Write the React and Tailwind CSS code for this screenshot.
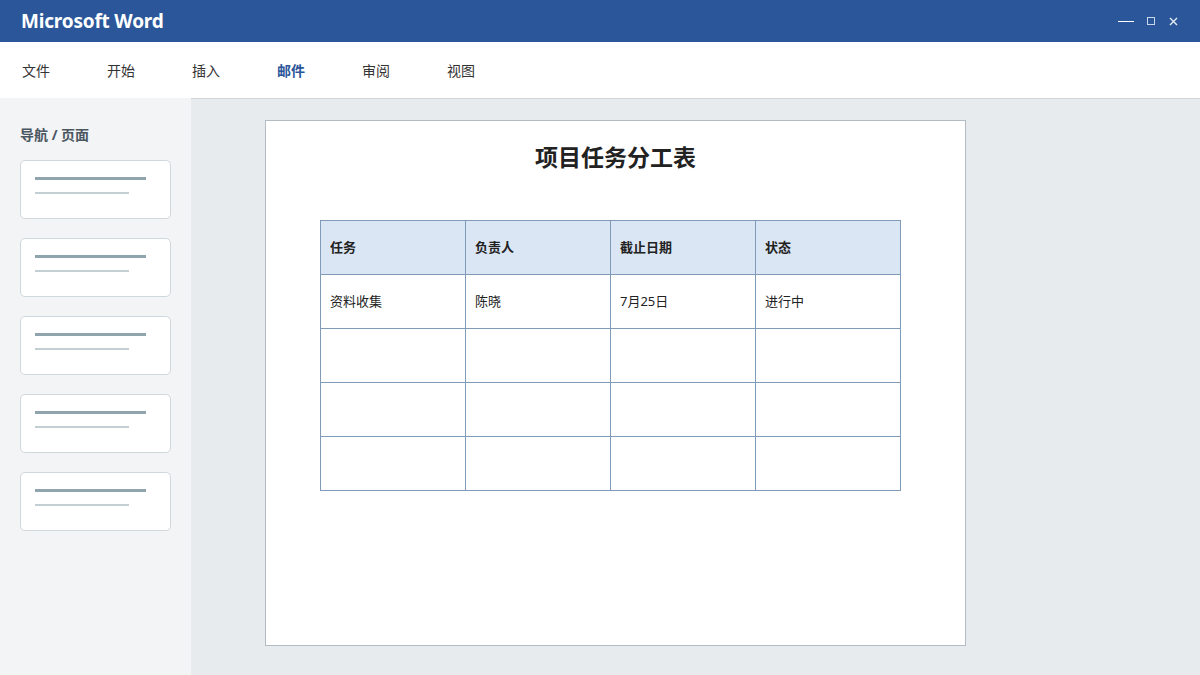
import React from "react";

const menus = ["文件", "开始", "插入", "邮件", "审阅", "视图"];
const headers = ["任务", "负责人", "截止日期", "状态"];
const rows = [
  ["资料收集", "陈晓", "7月25日", "进行中"],
  ["", "", "", ""],
  ["", "", "", ""],
  ["", "", "", ""],
];

const cjk = { fontFamily: '"Noto Sans", "Noto Sans CJK SC", sans-serif' };

function PageThumb() {
  return (
    <div className="w-[151px] h-[59px] shrink-0 bg-white border border-[#cfd8dc] rounded-[5px] pt-[16px] pl-[14px]">
      <div className="w-[111px] h-[3px] bg-[#90a4ae]" />
      <div className="w-[94px] h-[2px] bg-[#c3cfd3] mt-[12px]" />
    </div>
  );
}

export default function App() {
  return (
    <div className="w-[1200px] h-[675px] flex flex-col overflow-hidden" style={cjk}>
      <div className="h-[42px] shrink-0 bg-[#2b579a] flex items-center justify-between pl-[21px] pr-[22px] text-white">
        <span className="text-[19px] font-bold tracking-[-0.2px]">Microsoft Word</span>
        <div className="flex items-center">
          <div className="w-[16px] h-[1px] bg-white" />
          <div className="w-[8px] h-[8px] border border-[#c8d6ec] ml-[13px]" />
          <svg className="ml-[14px]" width="9" height="9" viewBox="0 0 9 9">
            <path d="M1 1 L8 8 M8 1 L1 8" stroke="#e6ecf6" strokeWidth="1.4" />
          </svg>
        </div>
      </div>

      <div className="h-[56px] shrink-0 bg-white flex items-center pl-[22px]">
        {menus.map((m) => (
          <div
            key={m}
            className={
              m === "邮件"
                ? "w-[85px] text-[14px] font-bold text-[#2b579a]"
                : "w-[85px] text-[14px] text-[#333]"
            }
          >
            {m}
          </div>
        ))}
      </div>

      <div className="flex flex-1 min-h-0">
        <div className="w-[191px] shrink-0 bg-[#f3f4f6] px-[20px] pt-[28px] flex flex-col">
          <div className="text-[14px] font-bold text-[#4a5660] leading-[18px] mb-[16px]">导航 / 页面</div>
          <div className="flex flex-col gap-[19px]">
            <PageThumb />
            <PageThumb />
            <PageThumb />
            <PageThumb />
            <PageThumb />
          </div>
        </div>

        <div className="flex-1 bg-[#e7ebee] border-t border-[#cfd6dc] pt-[21px] pl-[74px]">
          <div className="w-[701px] h-[526px] bg-white border border-[#b3bcc4]">
            <div className="text-center text-[23px] font-bold text-[#222] leading-[32px] mt-[20px]">
              项目任务分工表
            </div>
            <table className="border-collapse ml-[54px] mt-[47px] w-[581px] table-fixed">
              <thead>
                <tr className="h-[54px] bg-[#dbe6f4]">
                  {headers.map((h) => (
                    <th
                      key={h}
                      className="border border-[#7f9bb7] text-left pl-[9px] text-[13px] font-bold text-[#222]"
                    >
                      {h}
                    </th>
                  ))}
                </tr>
              </thead>
              <tbody>
                {rows.map((r, i) => (
                  <tr key={i} className="h-[54px]">
                    {r.map((c, j) => (
                      <td key={j} className="border border-[#7f9bb7] pl-[9px] text-[13px] text-[#222]">
                        {c}
                      </td>
                    ))}
                  </tr>
                ))}
              </tbody>
            </table>
          </div>
        </div>
      </div>
    </div>
  );
}
